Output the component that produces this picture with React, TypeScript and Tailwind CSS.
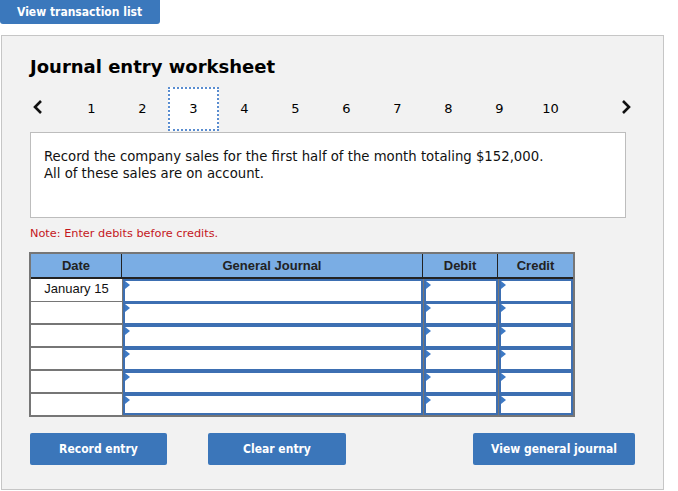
import React from "react";

const verdana = { fontFamily: '"DejaVu Sans", Verdana, sans-serif' };
const arial = { fontFamily: '"Liberation Sans", Arial, sans-serif' };
const btnFont = { fontFamily: '"DejaVu Sans Condensed", "DejaVu Sans", Tahoma, sans-serif' };

function InputCell() {
  return (
    <div className="relative h-full border-2 border-[#3d6fb2] bg-white">
      <span className="absolute left-0 top-0 h-0 w-0 border-y-[4px] border-l-[5px] border-y-transparent border-l-[#3d79c4]" />
    </div>
  );
}

export default function App() {
  const pages = ["1", "2", "3", "4", "5", "6", "7", "8", "9", "10"];
  const rows = ["January 15", "", "", "", "", ""];

  return (
    <div className="h-[491px] w-[678px] bg-white text-black" style={verdana}>
      <button
        className="ml-0 flex h-[24px] w-[160px] items-center rounded-b-[3px] bg-[#3b78bc] pl-[17px] text-[12px] font-bold text-white"
        style={btnFont}
      >
        View transaction list
      </button>

      <div className="ml-[1px] mt-[11px] h-[455px] w-[663px] border border-[#c6c6c6] bg-[#f2f2f2] pl-[27px] pt-[19px]">
        <h1 className="pl-[1px] text-[18px] font-bold leading-[24px]">Journal entry worksheet</h1>

        <div className="mt-[8px] flex h-[44px] items-center">
          <svg width="12" height="16" viewBox="0 0 12 16" className="ml-[3px] mt-[-4px]">
            <path d="M9 2 L3 8 L9 14" fill="none" stroke="#111" strokeWidth="2.6" />
          </svg>
          <div className="ml-[22px] flex">
            {pages.map((p) => (
              <div
                key={p}
                className={
                  "relative z-10 flex h-[44px] w-[51px] items-center justify-center text-[13px] " +
                  (p === "3" ? "border-2 border-dotted border-[#5a8dd0] bg-white" : "")
                }
              >
                {p}
              </div>
            ))}
          </div>
          <svg width="12" height="16" viewBox="0 0 12 16" className="ml-[44px] mt-[-4px]">
            <path d="M3 2 L9 8 L3 14" fill="none" stroke="#111" strokeWidth="2.6" />
          </svg>
        </div>

        <div className="ml-[1px] mt-[1px] h-[86px] w-[596px] border border-[#bdbdbd] bg-white px-[13px] pt-[15px] text-[13.25px] leading-[17px] text-[#111]">
          <p>Record the company sales for the first half of the month totaling $152,000.</p>
          <p>All of these sales are on account.</p>
        </div>

        <p className="ml-[1px] mt-[9px] text-[11.3px] leading-[14px] text-[#c4161c]">Note: Enter debits before credits.</p>

        <div className="mt-[11px] w-[546px] border-2 border-[#767676] bg-[#767676]" style={arial}>
          <div className="grid h-[25px] grid-cols-[91px_301px_75px_75px] border-b-2 border-[#222] bg-[#7aade4] text-[13px] font-bold text-[#222]">
            <div className="flex items-center justify-center border-r border-[#222]">Date</div>
            <div className="flex items-center justify-center border-r border-[#222]">General Journal</div>
            <div className="flex items-center justify-center border-r border-[#222]">Debit</div>
            <div className="flex items-center justify-center">Credit</div>
          </div>
          {rows.map((d, i) => (
            <div
              key={i}
              className={"grid grid-cols-[91px_301px_75px_75px] " + (i < rows.length - 1 ? "h-[23px]" : "h-[21px]")}
            >
              <div
                className={
                  "flex items-center justify-center bg-white pb-[2px] text-[13px] text-[#111] " +
                  (i < rows.length - 1 ? "border-b-2 border-[#767676]" : "")
                }
              >
                {d}
              </div>
              <div className="border-l-[1px] border-[#767676]">
                <InputCell />
              </div>
              <div className="border-l-[1px] border-[#767676]">
                <InputCell />
              </div>
              <div className="border-l-[1px] border-[#767676]">
                <InputCell />
              </div>
            </div>
          ))}
        </div>

        <div className="ml-[1px] mt-[16px] flex text-[12px] font-bold text-white" style={btnFont}>
          <button className="flex h-[32px] w-[137px] items-center justify-center rounded-[2px] bg-[#3b76ba]">Record entry</button>
          <button className="ml-[41px] flex h-[32px] w-[138px] items-center justify-center rounded-[2px] bg-[#3b76ba]">Clear entry</button>
          <button className="ml-[127px] flex h-[32px] w-[162px] items-center justify-center rounded-[2px] bg-[#3b76ba]">View general journal</button>
        </div>
      </div>
    </div>
  );
}
